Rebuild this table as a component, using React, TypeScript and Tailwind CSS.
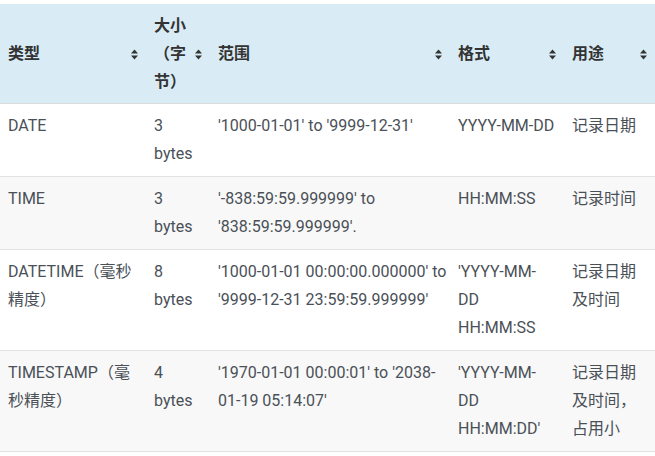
import React from 'react'

// sort indicator used in every header cell
function SortIcon() {
  return (
    <svg width="7" height="11" viewBox="0 0 7 11" className="shrink-0 text-[#333]">
      <path d="M0 4.5 L3.5 0.5 L7 4.5 Z" fill="currentColor" />
      <path d="M0 6.5 L3.5 10.5 L7 6.5 Z" fill="currentColor" />
    </svg>
  )
}

const headers: { key: string; label: React.ReactNode }[] = [
  { key: 'type', label: '类型' },
  {
    key: 'size',
    label: (
      <>
        大小
        <br />
        （字
        <br />
        节）
      </>
    ),
  },
  { key: 'range', label: '范围' },
  { key: 'format', label: '格式' },
  { key: 'use', label: '用途' },
]

const rows: React.ReactNode[][] = [
  ['DATE', <>3<br />bytes</>, "'1000-01-01' to '9999-12-31'", 'YYYY-MM-DD', '记录日期'],
  [
    'TIME',
    <>3<br />bytes</>,
    <>'-838:59:59.999999' to<br />'838:59:59.999999'.</>,
    'HH:MM:SS',
    '记录时间',
  ],
  [
    <>DATETIME（毫秒<br />精度）</>,
    <>8<br />bytes</>,
    <>'1000-01-01 00:00:00.000000' to<br />'9999-12-31 23:59:59.999999'</>,
    <>'YYYY-MM-<br />DD<br />HH:MM:SS</>,
    <>记录日期<br />及时间</>,
  ],
  [
    <>TIMESTAMP（毫<br />秒精度）</>,
    <>4<br />bytes</>,
    <>'1970-01-01 00:00:01' to '2038-<br />01-19 05:14:07'</>,
    <>'YYYY-MM-<br />DD<br />HH:MM:DD'</>,
    <>记录日期<br />及时间，<br />占用小</>,
  ],
]

export default function App() {
  return (
    <div
      className="w-[655px] h-[456px] overflow-hidden bg-white pt-1"
      style={{ fontFamily: 'Roboto, "Noto Sans CJK SC", sans-serif' }}
    >
      <table className="w-[655px] table-fixed border-collapse text-[16px] leading-[28px]">
        <colgroup>
          <col className="w-[146px]" />
          <col className="w-[64px]" />
          <col className="w-[240px]" />
          <col className="w-[114px]" />
          <col className="w-[91px]" />
        </colgroup>
        <thead>
          <tr className="bg-[#d9ecf5] border-b border-[#dcdcdc]">
            {headers.map((h) => (
              <th key={h.key} className="px-2 pt-2 pb-[7px] text-left font-bold text-[#333]">
                <div className="flex items-center justify-between gap-1 whitespace-nowrap">
                  <span>{h.label}</span>
                  <SortIcon />
                </div>
              </th>
            ))}
          </tr>
        </thead>
        <tbody>
          {rows.map((cells, i) => (
            <tr
              key={i}
              className={i % 2 === 1 ? 'bg-[#f8f8f8] border-b border-[#e2e2e2]' : 'bg-white border-b border-[#e2e2e2]'}
            >
              {cells.map((c, j) => (
                <td key={j} className="px-2 py-2 align-top whitespace-nowrap text-[#4a5057]">
                  {c}
                </td>
              ))}
            </tr>
          ))}
        </tbody>
      </table>
    </div>
  )
}
